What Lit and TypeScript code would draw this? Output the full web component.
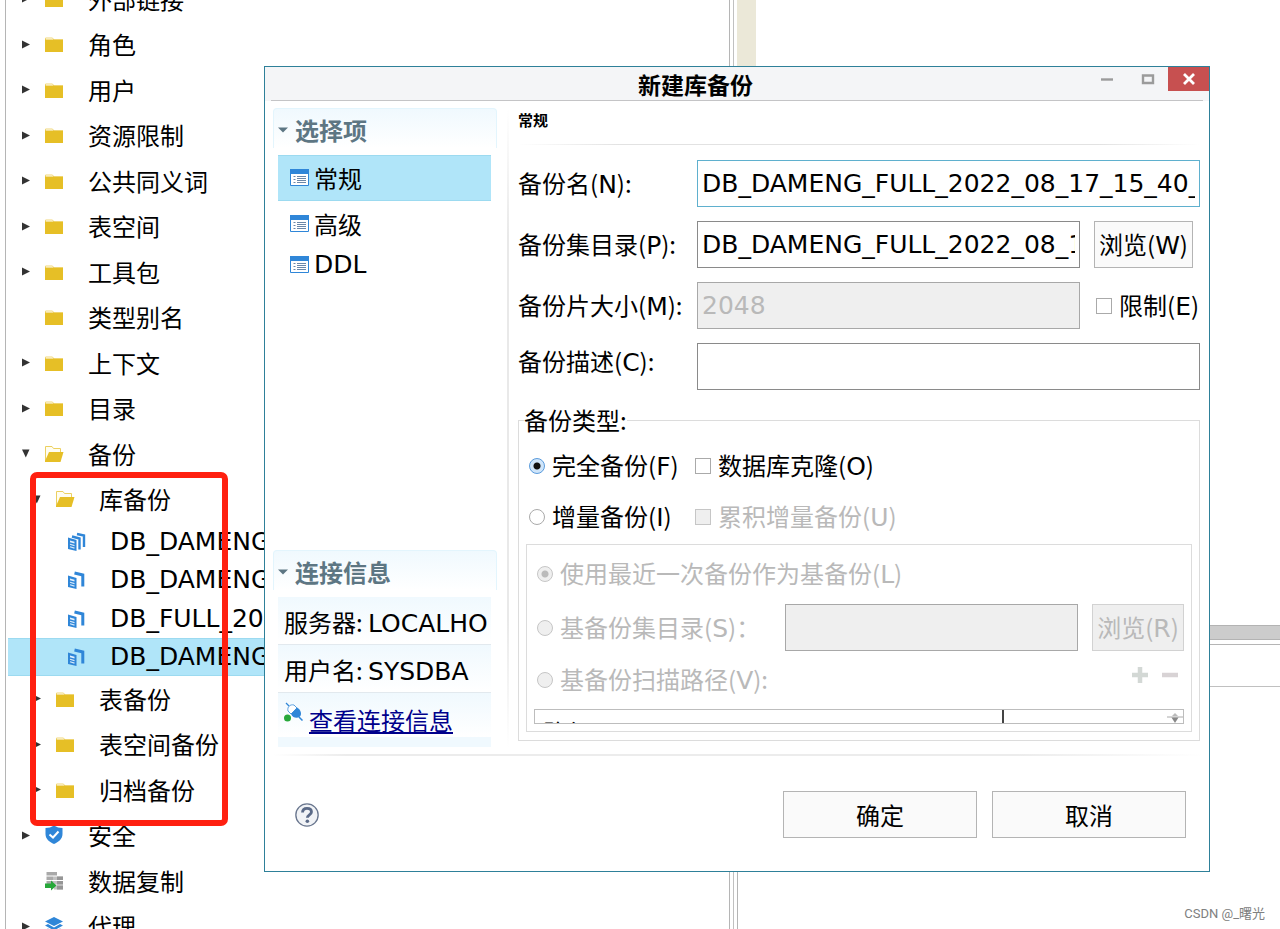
import { LitElement, html, svg, css, nothing } from "lit";
import { customElement, property } from "lit/decorators.js";
import { classMap } from "lit/directives/class-map.js";

type IconName =
  | "folder" | "open" | "docs3" | "docs2" | "shield" | "copy" | "layers"
  | "list" | "plug" | "help";

interface TreeNode {
  label: string;
  icon: IconName;
  depth: number;
  state?: "closed" | "expanded";
  leaf?: boolean;
  selected?: boolean;
}

const nodes: TreeNode[] = [
  { label: "外部链接", icon: "folder", depth: 0, state: "closed" },
  { label: "角色", icon: "folder", depth: 0, state: "closed" },
  { label: "用户", icon: "folder", depth: 0, state: "closed" },
  { label: "资源限制", icon: "folder", depth: 0, state: "closed" },
  { label: "公共同义词", icon: "folder", depth: 0, state: "closed" },
  { label: "表空间", icon: "folder", depth: 0, state: "closed" },
  { label: "工具包", icon: "folder", depth: 0, state: "closed" },
  { label: "类型别名", icon: "folder", depth: 0 },
  { label: "上下文", icon: "folder", depth: 0, state: "closed" },
  { label: "目录", icon: "folder", depth: 0, state: "closed" },
  { label: "备份", icon: "open", depth: 0, state: "expanded" },
  { label: "库备份", icon: "open", depth: 1, state: "expanded" },
  { label: "DB_DAMENG", icon: "docs3", depth: 2, leaf: true },
  { label: "DB_DAMENG", icon: "docs2", depth: 2, leaf: true },
  { label: "DB_FULL_20", icon: "docs2", depth: 2, leaf: true },
  { label: "DB_DAMENG", icon: "docs2", depth: 2, leaf: true, selected: true },
  { label: "表备份", icon: "folder", depth: 1, state: "closed" },
  { label: "表空间备份", icon: "folder", depth: 1, state: "closed" },
  { label: "归档备份", icon: "folder", depth: 1, state: "closed" },
  { label: "安全", icon: "shield", depth: 0, state: "closed" },
  { label: "数据复制", icon: "copy", depth: 0 },
  { label: "代理", icon: "layers", depth: 0, state: "closed" },
];

const frontDoc = svg`
  <path d="M1 5.500L9.500 8V19L1 17Z" fill="#2f86d8"/>
  <path d="M3 8.500L7.500 9.800V11.500L3 10.200Z" fill="#e4f0fb"/>
  <path d="M3 12.300L7.500 13.600M3 14.800L7.500 16.100" stroke="#d8eafa" stroke-width="1.100"/>`;

const icons: Record<IconName, unknown> = {
  folder: svg`
    <path d="M0.500 6V4H7.500L9 6H18" fill="none" stroke="#f0d778" stroke-width="1"/>
    <path d="M0 5.500H18V18H0Z" fill="#e6bf26"/>`,
  open: svg`
    <path d="M0.500 17V2.500H7L8.500 4.500H15.500V8" fill="#fffdf0" stroke="#ecd060" stroke-width="1"/>
    <path d="M4 8H18.500L15.500 18H0V17Z" fill="#e6bf26"/>`,
  docs3: svg`
    <path d="M5 4.500L12.500 6.500V17.500" fill="none" stroke="#2f86d8" stroke-width="2.400"/>
    <path d="M10 2L17 3.500V15" fill="none" stroke="#2f86d8" stroke-width="2.400"/>
    ${frontDoc}`,
  docs2: svg`
    <path d="M7.500 3L15.800 5V16.500" fill="none" stroke="#2f86d8" stroke-width="3"/>
    ${frontDoc}`,
  shield: svg`
    <path d="M9 0.500C11.500 2.200 14.500 3 17.500 3V9C17.500 14 13.500 17 9 19C4.500 17 0.500 14 0.500 9V3C3.500 3 6.500 2.200 9 0.500Z" fill="#2f86d8"/>
    <path d="M4.500 9.500L8 12.500L13.500 6.500" fill="none" stroke="#fff" stroke-width="2"/>`,
  copy: svg`
    <path d="M1.500 1H12V4.500H1.500ZM1.500 5.500H8V9H1.500ZM1.500 10H8V13H1.500Z" fill="#a9a9a9"/>
    <path d="M8 5.500H18V9H8ZM8 10H18V13.500H8ZM9 14.500H18V18.500H9Z" fill="#c2c2c2"/>
    <path d="M12 5.500H18V9H12ZM12 10H18V13.500H12ZM12 14.500H18V18.500H12Z" fill="#969696"/>
    <path d="M0 12.500H6V9.500L11.500 14.500L6 19.500V17H0Z" fill="#27a83a"/>`,
  layers: svg`
    <path d="M9 1L18 5.500L9 10L0 5.500Z" fill="#2f86d8"/>
    <path d="M0 9.500L3 8L9 11.500L15 8L18 9.500L9 14.500Z" fill="#2f86d8"/>
    <path d="M0 14L3 12.500L9 16L15 12.500L18 14L9 19Z" fill="#2f86d8"/>`,
  list: svg`
    <path d="M0.500 1.500H18.500V17.500H0.500Z" fill="#fff" stroke="#2f86d8"/>
    <path d="M0 1H19V6H0Z" fill="#2f86d8"/>
    <path d="M3.500 8.500H5.500M3.500 11.500H5.500M3.500 14.500H5.500M7 8.500H16M7 10.500H16M7 12.500H16M7 14.500H16" stroke="#6b87a8" stroke-width="1"/>`,
  plug: svg`
    <path d="M2 1L5 4" stroke="#2f86d8" stroke-width="1.200"/>
    <path d="M4 9C3 5 6 2 10 3L13 6L7 12Z" fill="#fff" stroke="#5aa0e0"/>
    <path d="M13 5.500C17 8 18 12 16 14.500C13 17 9 16 7 12Z" fill="#2f86d8"/>
    <path d="M15 15L18.500 18.500" stroke="#2f86d8" stroke-width="1.500"/>
    <circle cx="3.500" cy="16" r="3.500" fill="#27a83a"/>`,
  help: svg`
    <circle cx="10" cy="10" r="9.300" fill="#f1f3f6" stroke="#69768e" stroke-width="1.100"/>
    <path d="M6.300 8C6.300 5.500 8 4.500 10 4.500C12.300 4.500 13.700 5.700 13.700 7.500C13.700 9.900 10.300 9.800 10.300 12.300" fill="none" stroke="#5b6a87" stroke-width="2.400"/>
    <circle cx="10.300" cy="15.200" r="1.500" fill="#5b6a87"/>`,
};

const icon = (name: IconName) => html`
  <svg class="icon" viewBox="0 0 ${name === "help" ? "20 20" : "19 20"}" aria-hidden="true">${icons[name]}</svg>`;

const key = (k: string, tail = "") => html`(<span class="latin">${k}</span>)${tail}`;

const shared = css`
  * { box-sizing: border-box; }
  .icon { width: 19px; height: 20px; flex: none; display: block; }
  .latin { font-family: "DejaVu Sans", sans-serif; font-size: 25px; }
`;

@customElement("object-tree")
export class ObjectTree extends LitElement {
  static styles = [shared, css`
    :host { display: block; overflow: hidden; }
    ul { list-style: none; margin: -24px 0 0; padding: 0; }
    .row {
      display: flex; align-items: center; height: 45px;
      margin-left: 2px; white-space: nowrap;
    }
    .row:nth-child(even) { height: 46px; }
    .row.leaf { height: 38px; font-family: "DejaVu Sans", sans-serif; font-size: 25px; }
    .row.leaf:nth-child(odd) { height: 39px; }
    .row.selected { background: #b0e5f9; border: 1px solid #9cdaf0; border-width: 1px 0; }
    .indent { flex: none; }
    .twist { flex: none; width: 9px; height: 9px; margin: 0 14px; fill: #333; }
    .label { margin-left: 24px; }
  `];

  render() {
    return html`<ul role="tree">
      ${nodes.map((n) => html`
        <li role="treeitem" aria-selected=${n.selected ? "true" : "false"}
          class=${classMap({ row: true, leaf: !!n.leaf, selected: !!n.selected })}>
          <span class="indent" style="width:${n.depth * 11}px"></span>
          <svg class="twist" viewBox="0 0 9 9" aria-hidden="true">
            ${n.state === "closed" ? svg`<path d="M0 0.500L8 4.500L0 8.500Z"/>`
              : n.state === "expanded" ? svg`<path d="M0 0.500H7.500L3.800 8.500Z"/>` : nothing}
          </svg>
          ${icon(n.icon)}
          <span class="label">${n.label}</span>
        </li>`)}
    </ul>`;
  }
}

@customElement("side-section")
export class SideSection extends LitElement {
  @property() heading = "";

  static styles = [shared, css`
    :host { display: block; }
    h2 {
      margin: 0; height: 40px; line-height: 36px; padding: 2px 0 0 4px;
      display: flex; align-items: center; gap: 7px;
      font-size: 24px; font-weight: 700; color: #5d7683;
      border: 1px solid #e3f5fd; border-bottom: 0; border-radius: 4px 4px 0 0;
      background: linear-gradient(#f0f9fe, #fff);
    }
    svg { width: 10px; height: 6px; fill: #5d7683; flex: none; }
    .content { padding: 7px 6px 0 5px; }
  `];

  render() {
    return html`
      <h2><svg viewBox="0 0 10 6" aria-hidden="true"><path d="M0 0.500H10L5 5.500Z"/></svg>${this.heading}</h2>
      <div class="content"><slot></slot></div>`;
  }
}

@customElement("backup-dialog")
export class BackupDialog extends LitElement {
  static styles = [shared, css`
    :host { display: block; background: #fff; border: 1px solid #2e8099; }
    input, button { font: inherit; color: inherit; border-radius: 0; margin: 0; }

    .title { display: flex; height: 34px; background: #f4f5f7; }
    .title h1 { flex: 1; margin: 0; padding-left: 40px; text-align: center; font-size: 23px; line-height: 34px; font-weight: 700; }
    .title button { width: 41px; height: 24px; border: 0; padding: 0; background: none; display: grid; place-items: center; }
    .title button svg { width: 14px; height: 12px; display: block; }
    .title .close { background: #c75050; }
    .rule { height: 1px; margin: -1px 6px 0; background: #c4c4c6; }

    .body { display: flex; padding-left: 8px; padding-right: 9px; }
    .side { flex: none; width: 224px; padding: 7px 0; display: flex; flex-direction: column; justify-content: space-between; }
    .divider { flex: none; width: 2px; margin: 7px 9px 6px 10px; background: linear-gradient(#fff, #e9e9e9 20%, #e9e9e9 80%, #fff); }
    .main { flex: 1; min-width: 0; padding-bottom: 13px; }

    .pages { list-style: none; margin: 0; padding: 0; }
    .pages a { display: flex; align-items: center; gap: 5px; height: 45px; padding-left: 12px; color: #000; text-decoration: none; border: 1px solid transparent; border-width: 1px 0; }
    .pages .current { height: 46px; background: #b0e5f9; border-color: #9cdaf0; }
    .pages .ddl { height: 38px; font-family: "DejaVu Sans", sans-serif; font-size: 25px; }

    .info { height: 46px; line-height: 36px; padding: 7px 0 0 6px; white-space: nowrap; overflow: hidden; background: linear-gradient(#f0f9fe, #fff); }
    .info + .info { margin-top: 1px; border-top: 1px solid #e2e9ee; height: 47px; }
    .info.link { display: flex; gap: 6px; height: 45px; padding-top: 9px; }
    .info.link a { color: #00008b; text-underline-offset: 2px; }
    .band { height: 10px; background: #f0f9fe; }

    h2 { margin: 0; height: 43px; line-height: 38px; font-size: 15px; font-weight: 700; }
    .fade { height: 1px; background: linear-gradient(90deg, #fff, #e2e2e2 15%, #e2e2e2 85%, #fff); }

    .fields { display: grid; grid-template-columns: 165px minmax(0, 1fr) 106px; column-gap: 14px; row-gap: 14px; align-items: center; margin-top: 15px; }
    .fields label { white-space: nowrap; line-height: 36px; }
    .fields .wide { grid-column: span 2; }
    .fields .upper { align-self: start; }
    .text { width: 100%; height: 47px; padding: 0 4px; border: 1px solid #8a8a8a; background: #fff; font-family: "DejaVu Sans", sans-serif; font-size: 25px; outline: none; }
    .text.active { border-color: #5fb0ce; }
    .text:disabled { background: #efefef; border-color: #a8a8a8; color: #b9b9b9; }
    .btn { height: 47px; padding: 0; border: 1px solid #b4b4b4; background: #fafafa; white-space: nowrap; }
    .btn:disabled { background: #efefef; border-color: #d2d2d2; color: #b9b9b9; }
    .browse { width: 99px; }

    .check { display: flex; align-items: center; gap: 7px; white-space: nowrap; line-height: 36px; }
    .check input { appearance: none; flex: none; width: 16px; height: 16px; border: 1px solid #aaa; background: #fff; }
    .check input[type="radio"] { border-radius: 50%; }
    .check input[type="radio"]:checked { border-color: #5a9bdc; background: radial-gradient(circle, #111 3px, #cfe5fa 4px); }
    .check.off { color: #b9b9b9; }
    .check input:disabled { background: #efefef; border-color: #c6c6c6; }
    .check input[type="radio"]:disabled:checked { border-color: #c6c6c6; background: radial-gradient(circle, #bbb 3px, #efefef 4px); }
    .fields .check { padding-left: 2px; }

    fieldset { margin: 15px 0 0; padding: 0 7px 8px; border: 1px solid #dcdcdc; min-width: 0; }
    legend { padding: 0; margin-left: -2px; line-height: 30px; }
    .kinds { display: grid; grid-template-columns: 166px 1fr; row-gap: 13px; margin: 12px 0 8px 3px; }
    .base { border: 1px solid #dcdcdc; padding: 10px 7px 7px; }
    .base .check { padding-left: 3px; }
    .line { display: flex; align-items: center; }
    .line .check { width: 251px; }
    .dir { height: 47px; margin: 11px 0 10px; gap: 14px; }
    .dir .check { margin-right: -14px; }
    .dir .text { flex: 1; min-width: 0; width: 0; }
    .dir .btn { width: 92px; flex: none; }
    .scan { justify-content: space-between; align-items: flex-start; margin-bottom: 10px; padding-right: 5px; }
    .tools { display: flex; gap: 12px; }
    .tools button { border: 0; padding: 4px 0 0; background: none; width: 18px; height: 24px; display: block; }
    .tools svg { width: 18px; height: 18px; display: block; }
    .grid { height: 15px; overflow: hidden; border: 1px solid #bdbdbd; display: flex; }
    table { flex: 1; border-collapse: collapse; table-layout: fixed; }
    th { height: 44px; padding: 0 8px; text-align: left; font-weight: 400; }
    th:first-child { width: 74%; border-right: 2px solid #444; }
    .spin { width: 16px; height: 13px; flex: none; }

    .foot-rule { height: 2px; margin: 0 6px 0 8px; background: linear-gradient(90deg, #fff, #ececec 8%, #ececec 80%, #fff); }
    footer { display: flex; align-items: center; gap: 15px; padding: 35px 23px 33px 30px; }
    footer .assist { margin-right: auto; border: 0; background: none; padding: 0; }
    footer .icon { width: 24px; height: 24px; }
    footer .btn { width: 194px; }
  `];

  render() {
    return html`
      <header class="title">
        <h1>新建库备份</h1>
        <button aria-label="最小化"><svg viewBox="0 0 14 12"><path d="M1 6.500H13" stroke="#9b9b9b" stroke-width="2.400"/></svg></button>
        <button aria-label="最大化"><svg viewBox="0 0 14 12"><path d="M2 2.500H12V10H2Z" fill="none" stroke="#9b9b9b" stroke-width="2.400"/></svg></button>
        <button class="close" aria-label="关闭"><svg viewBox="0 0 14 12"><path d="M2 1L12 11M12 1L2 11" stroke="#fff" stroke-width="2.800"/></svg></button>
      </header>
      <div class="rule"></div>

      <div class="body">
        <nav class="side">
          <side-section heading="选择项">
            <ul class="pages">
              <li><a href="#general" class="current">${icon("list")}常规</a></li>
              <li><a href="#advanced">${icon("list")}高级</a></li>
              <li><a href="#ddl" class="ddl">${icon("list")}DDL</a></li>
            </ul>
          </side-section>
          <side-section heading="连接信息">
            <div class="info">服务器: <span class="latin">LOCALHO</span></div>
            <div class="info">用户名: <span class="latin">SYSDBA</span></div>
            <div class="info link">${icon("plug")}<a href="#connection">查看连接信息</a></div>
            <div class="band"></div>
          </side-section>
        </nav>
        <div class="divider"></div>

        <section class="main">
          <h2>常规</h2>
          <div class="fade"></div>
          <div class="fields">
            <label for="name">备份名${key("N", ":")}</label>
            <input id="name" class="text wide active" value="DB_DAMENG_FULL_2022_08_17_15_40_12">

            <label for="dir">备份集目录${key("P", ":")}</label>
            <input id="dir" class="text" value="DB_DAMENG_FULL_2022_08_17_15_40_12">
            <button class="btn browse">浏览${key("W")}</button>

            <label for="size">备份片大小${key("M", ":")}</label>
            <input id="size" class="text" value="2048" disabled>
            <label class="check"><input type="checkbox"><span>限制${key("E")}</span></label>

            <label for="desc" class="upper">备份描述${key("C", ":")}</label>
            <input id="desc" class="text wide">
          </div>

          <fieldset>
            <legend>备份类型:</legend>
            <div class="kinds">
              <label class="check"><input type="radio" name="kind" checked><span>完全备份${key("F")}</span></label>
              <label class="check"><input type="checkbox"><span>数据库克隆${key("O")}</span></label>
              <label class="check"><input type="radio" name="kind"><span>增量备份${key("I")}</span></label>
              <label class="check off"><input type="checkbox" disabled><span>累积增量备份${key("U")}</span></label>
            </div>
            <div class="base">
              <label class="check off"><input type="radio" name="base" checked disabled><span>使用最近一次备份作为基备份${key("L")}</span></label>
              <div class="line dir">
                <label class="check off"><input type="radio" name="base" disabled><span>基备份集目录${key("S", "：")}</span></label>
                <input class="text" aria-label="基备份集目录" disabled>
                <button class="btn" disabled>浏览${key("R")}</button>
              </div>
              <div class="line scan">
                <label class="check off"><input type="radio" name="base" disabled><span>基备份扫描路径${key("V", ":")}</span></label>
                <div class="tools">
                  <button aria-label="添加" disabled><svg viewBox="0 0 18 18"><path d="M9 1V17M1 9H17" stroke="#d3d8d5" stroke-width="4.500"/></svg></button>
                  <button aria-label="删除" disabled><svg viewBox="0 0 18 18"><path d="M1 9H17" stroke="#d8d3d5" stroke-width="4.500"/></svg></button>
                </div>
              </div>
              <div class="grid">
                <table><thead><tr><th>路径</th><th></th></tr></thead></table>
                <svg class="spin" viewBox="0 0 16 13" aria-hidden="true">
                  <path d="M0 7H16" stroke="#aaa"/><path d="M5 6L8 3L11 6Z" fill="#bbb"/><path d="M4.500 7.500H11.500L8 13Z" fill="#888"/>
                </svg>
              </div>
            </div>
          </fieldset>
        </section>
      </div>

      <div class="foot-rule"></div>
      <footer>
        <button class="assist" aria-label="帮助">${icon("help")}</button>
        <button class="btn">确定</button>
        <button class="btn">取消</button>
      </footer>`;
  }
}

@customElement("app-root")
export class AppRoot extends LitElement {
  static styles = [shared, css`
    :host {
      display: block; position: relative; height: 100vh; overflow: hidden;
      background: #fff; color: #000;
      font-family: "Noto Sans CJK SC", "DejaVu Sans", sans-serif;
      font-size: 24px; line-height: 36px;
    }
    .frame { display: flex; height: 100%; padding-left: 5px; }
    object-tree { flex: 0 0 725px; border: 1px solid #b5b5b5; border-width: 0 1px; }
    .work { flex: 1; display: flex; flex-direction: column; margin-left: 3px; border-left: 1px solid #c0c0c0; }
    .editor { height: 625px; padding-left: 3px; }
    .gutter { width: 19px; height: 100%; background: #ebe8d8; }
    .scroll { height: 15px; background: #ccc; border: 1px solid #b3b3b3; border-width: 1px 0; }
    .output { flex: 1; margin: 4px 0 0 3px; border: 1px solid #b5b5b5; border-width: 1px 0 0 1px; }
    .tabs { height: 42px; border-bottom: 1px solid #c0c0c0; }
    backup-dialog { position: absolute; left: 264px; right: 70px; top: 66px; }
    .marker { position: absolute; left: 30px; top: 472px; width: 198px; height: 354px; border: 6px solid #ff2010; border-radius: 7px; pointer-events: none; }
    .credit { position: absolute; right: 15px; bottom: 6px; font: 13px/18px Roboto, "Noto Sans CJK SC", sans-serif; color: #808080; }
  `];

  render() {
    return html`
      <div class="frame">
        <object-tree></object-tree>
        <div class="work">
          <div class="editor"><div class="gutter"></div></div>
          <div class="scroll"></div>
          <div class="output"><div class="tabs"></div></div>
        </div>
      </div>
      <div class="marker"></div>
      <backup-dialog></backup-dialog>
      <div class="credit">CSDN @_曙光</div>`;
  }
}
